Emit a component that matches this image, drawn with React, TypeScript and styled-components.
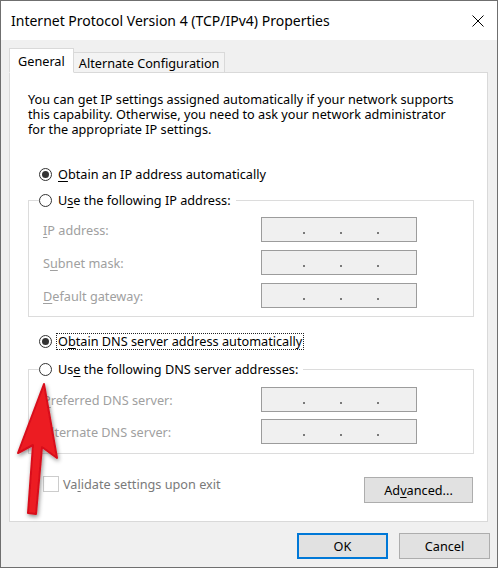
import styled, { createGlobalStyle } from 'styled-components';

const GlobalStyle = createGlobalStyle`
  html, body {
    margin: 0;
    padding: 0;
    background: #ffffff;
  }
  body {
    font-family: "Noto Sans", "Open Sans", sans-serif;
    font-size: 12.7px;
    color: #000;
  }
`;

const ipFields = ['IP address:', 'Subnet mask:', 'Default gateway:'];

const Mn = ({ text, at }: { text: string; at: number }) => (
  <>
    {text.slice(0, at)}
    <U>{text[at]}</U>
    {text.slice(at + 1)}
  </>
);

const IpInput = () => (
  <IpBox>
    <IpDot />
    <IpDot />
    <IpDot />
  </IpBox>
);

const App = () => {
  return (
    <>
      <GlobalStyle />
      <Window>
        <TitleBar>
          <Title>Internet Protocol Version 4 (TCP/IPv4) Properties</Title>
          <CloseButton>
            <svg width="12" height="12" viewBox="0 0 12 12">
              <path d="M0.5 0.5 L11.5 11.5 M11.5 0.5 L0.5 11.5" stroke="#000" strokeWidth="1" />
            </svg>
          </CloseButton>
        </TitleBar>
        <Body>
          <TabRow>
            <Tab $active>General</Tab>
            <Tab>Alternate Configuration</Tab>
          </TabRow>
          <Panel>
            <Description>
              <DescLine>You can get IP settings assigned automatically if your network supports</DescLine>
              <DescLine>this capability. Otherwise, you need to ask your network administrator</DescLine>
              <DescLine>for the appropriate IP settings.</DescLine>
            </Description>

            <RadioRow $top={29}>
              <RadioCircle $checked />
              <RadioText>
                <Mn text="Obtain an IP address automatically" at={0} />
              </RadioText>
            </RadioRow>

            <Group $top={10}>
              <Legend>
                <RadioRow>
                  <RadioCircle />
                  <RadioText>
                    <Mn text="Use the following IP address:" at={1} />
                  </RadioText>
                </RadioRow>
              </Legend>
              <FieldGrid $padTop={9} $padBottom={8} $gap={8}>
                <FieldLabel>
                  <Mn text={ipFields[0]} at={0} />
                </FieldLabel>
                <IpInput />
                <FieldLabel>
                  <Mn text={ipFields[1]} at={1} />
                </FieldLabel>
                <IpInput />
                <FieldLabel>
                  <Mn text={ipFields[2]} at={0} />
                </FieldLabel>
                <IpInput />
              </FieldGrid>
            </Group>

            <RadioRow $top={16}>
              <RadioCircle $checked />
              <RadioText $focused>
                <Mn text="Obtain DNS server address automatically" at={1} />
              </RadioText>
            </RadioRow>

            <Group $top={12}>
              <Legend>
                <RadioRow>
                  <RadioCircle />
                  <RadioText>
                    <Mn text="Use the following DNS server addresses:" at={2} />
                  </RadioText>
                </RadioRow>
              </Legend>
              <FieldGrid $padTop={10} $padBottom={9} $gap={7}>
                <FieldLabel>
                  <Mn text="Preferred DNS server:" at={0} />
                </FieldLabel>
                <IpInput />
                <FieldLabel>
                  <Mn text="Alternate DNS server:" at={0} />
                </FieldLabel>
                <IpInput />
              </FieldGrid>
            </Group>

            <BottomRow>
              <CheckRow>
                <CheckBox />
                <CheckText>
                  <Mn text="Validate settings upon exit" at={2} />
                </CheckText>
              </CheckRow>
              <Button $width={109} $top={1}>
                <Mn text="Advanced..." at={2} />
              </Button>
            </BottomRow>
          </Panel>
          <Footer>
            <Button $width={91} $primary>
              OK
            </Button>
            <Button $width={91}>Cancel</Button>
          </Footer>
        </Body>

        <Arrow width="80" height="160" viewBox="0 0 80 160">
          <defs>
            <filter id="arrowShadow" x="-30%" y="-30%" width="160%" height="160%">
              <feDropShadow dx="1" dy="2" stdDeviation="2" floodColor="#000" floodOpacity="0.45" />
            </filter>
          </defs>
          <path
            d="M43 13 L17 82 L32 74 L27 142 L35 143 L41 76 L56 87 Z"
            fill="#ec1c24"
            stroke="#d8101a"
            strokeWidth="2"
            strokeLinejoin="round"
            filter="url(#arrowShadow)"
          />
        </Arrow>
      </Window>
    </>
  );
};

const Window = styled.div`
  position: relative;
  box-sizing: border-box;
  width: 498px;
  height: 568px;
  border: 1px solid #6f6f6f;
  display: flex;
  flex-direction: column;
  background: #f0f0f0;
`;

const TitleBar = styled.div`
  height: 39px;
  background: #ffffff;
  display: flex;
  align-items: center;
  justify-content: space-between;
  padding: 0 13px 0 10px;
`;

const Title = styled.div`
  font-size: 14px;
  color: #000;
  white-space: nowrap;
`;

const CloseButton = styled.div`
  display: flex;
  align-items: center;
  justify-content: center;
  width: 12px;
  height: 12px;
`;

const Body = styled.div`
  flex: 1;
  display: flex;
  flex-direction: column;
  padding: 8px 0 0 8px;
`;

const TabRow = styled.div`
  display: flex;
  align-items: flex-end;
  height: 25px;
  margin-bottom: -1px;
  position: relative;
  z-index: 1;
`;

const Tab = styled.div<{ $active?: boolean }>`
  box-sizing: border-box;
  height: ${(p) => (p.$active ? 25 : 21)}px;
  padding: 0 ${(p) => (p.$active ? 8 : 5)}px;
  display: flex;
  align-items: center;
  background: ${(p) => (p.$active ? '#ffffff' : '#f3f3f3')};
  border: 1px solid #d9d9d9;
  border-left: ${(p) => (p.$active ? '1px solid #d9d9d9' : 'none')};
  border-bottom: 1px solid ${(p) => (p.$active ? '#ffffff' : '#d9d9d9')};
  white-space: nowrap;
`;

const Panel = styled.div`
  box-sizing: border-box;
  width: 479px;
  height: 450px;
  background: #ffffff;
  border: 1px solid #d9d9d9;
  padding: 19px 13px 0 18px;
  display: flex;
  flex-direction: column;
`;

const Description = styled.div`
  display: flex;
  flex-direction: column;
`;

const DescLine = styled.div`
  height: 15px;
  line-height: 15px;
  white-space: nowrap;
`;

const RadioRow = styled.div<{ $top?: number }>`
  display: flex;
  align-items: center;
  gap: 5px;
  height: 16px;
  margin-top: ${(p) => p.$top ?? 0}px;
  margin-left: ${(p) => (p.$top === undefined ? 0 : 11)}px;
`;

const RadioCircle = styled.span<{ $checked?: boolean }>`
  box-sizing: border-box;
  width: 13px;
  height: 13px;
  border-radius: 50%;
  border: 1px solid #333333;
  background: #ffffff;
  display: flex;
  align-items: center;
  justify-content: center;
  flex-shrink: 0;
  &::after {
    content: '';
    display: ${(p) => (p.$checked ? 'block' : 'none')};
    width: 7px;
    height: 7px;
    border-radius: 50%;
    background: #333333;
  }
`;

const RadioText = styled.span<{ $focused?: boolean }>`
  line-height: 15px;
  white-space: nowrap;
  outline: ${(p) => (p.$focused ? '1px dotted #222' : 'none')};
  outline-offset: 0px;
  padding: 0 1px;
`;

const U = styled.span`
  text-decoration: underline;
  text-underline-offset: 2px;
`;

const Group = styled.fieldset<{ $top: number }>`
  margin: ${(p) => p.$top}px 0 0 0;
  padding: 0;
  min-width: 0;
  border: 1px solid #dcdcdc;
`;

const Legend = styled.legend`
  margin-left: 10px;
  padding: 0 4px 0 0;
  height: 16px;
  background: #ffffff;
`;

const FieldGrid = styled.div<{ $padTop: number; $padBottom: number; $gap: number }>`
  display: grid;
  grid-template-columns: 218px 156px;
  row-gap: ${(p) => p.$gap}px;
  align-items: center;
  padding: ${(p) => p.$padTop}px 0 ${(p) => p.$padBottom}px 14px;
`;

const FieldLabel = styled.div`
  color: #a0a0a0;
  white-space: nowrap;
`;

const IpBox = styled.div`
  box-sizing: border-box;
  height: 25px;
  background: #f0f0f0;
  border: 1px solid #9c9c9c;
  display: flex;
  align-items: flex-end;
  padding: 0 0 7px 41px;
  gap: 35px;
`;

const IpDot = styled.span`
  width: 2px;
  height: 2px;
  background: #7a7a7a;
`;

const BottomRow = styled.div`
  display: flex;
  justify-content: space-between;
  align-items: flex-start;
  margin-top: 22px;
  padding-right: 1px;
`;

const CheckRow = styled.div`
  display: flex;
  align-items: center;
  gap: 4px;
  margin-left: 15px;
  height: 16px;
`;

const CheckBox = styled.span`
  box-sizing: border-box;
  width: 16px;
  height: 16px;
  border: 1px solid #cccccc;
  background: #ffffff;
`;

const CheckText = styled.span`
  color: #7a7a7a;
  white-space: nowrap;
`;

const Button = styled.button<{ $width: number; $primary?: boolean; $top?: number }>`
  box-sizing: border-box;
  width: ${(p) => p.$width}px;
  height: 26px;
  margin-top: ${(p) => p.$top ?? 0}px;
  background: #e1e1e1;
  border: ${(p) => (p.$primary ? '2px solid #0078d7' : '1px solid #adadad')};
  font-family: inherit;
  font-size: 12.7px;
  color: #000;
  padding: 0;
`;

const Footer = styled.div`
  display: flex;
  justify-content: flex-end;
  gap: 11px;
  margin-top: 11px;
  padding-right: 7px;
`;

const Arrow = styled.svg`
  position: absolute;
  left: 0;
  top: 370px;
  pointer-events: none;
`;

export default App;
